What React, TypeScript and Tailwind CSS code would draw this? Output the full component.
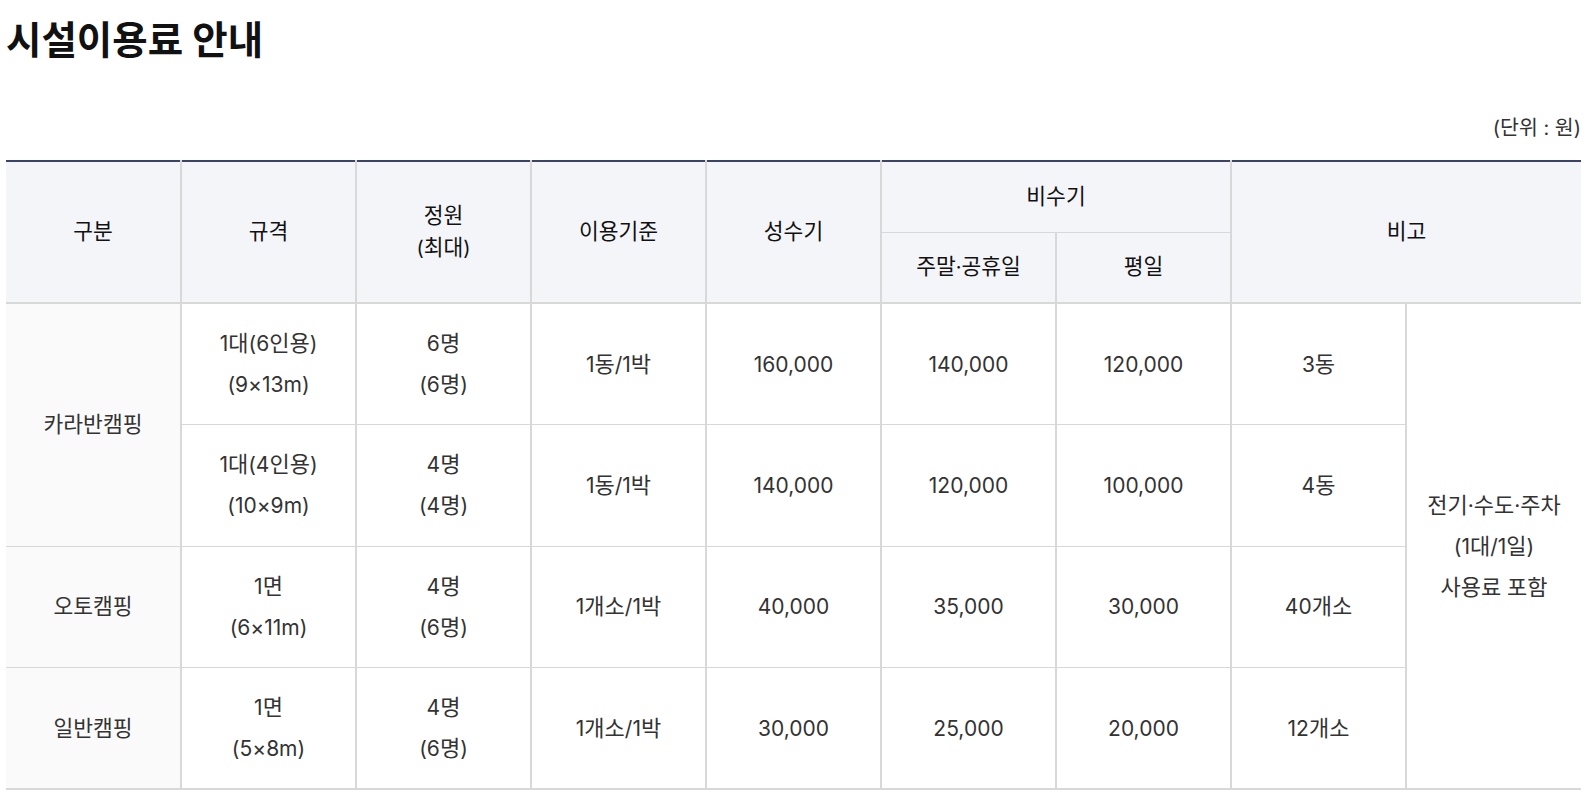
import React from "react";

const HANGUL = /([\uAC00-\uD7A3]+)/;

function T({ s, k = "text-[22px]" }: { s: string; k?: string }) {
  const parts = s.split(HANGUL);
  return (
    <>
      {parts.map((p, i) =>
        /[\uAC00-\uD7A3]/.test(p) ? (
          <span key={i} className={k}>
            {p}
          </span>
        ) : (
          <React.Fragment key={i}>{p}</React.Fragment>
        )
      )}
    </>
  );
}

function Lines({ lines, k }: { lines: string[]; k?: string }) {
  return (
    <>
      {lines.map((l, i) => (
        <React.Fragment key={i}>
          {i > 0 && <br />}
          <T s={l} k={k} />
        </React.Fragment>
      ))}
    </>
  );
}

const H = "text-[21.5px]";
const th = "bg-[#f4f5f9] text-[#111] font-normal text-[20px] leading-[31px] text-center align-middle border-[#d8d8d8]";
const td = "text-[#333] text-[21px] leading-[41px] text-center align-middle border-[#d8d8d8]";

function Cell({ children, className = "", rowSpan, colSpan }: { children?: React.ReactNode; className?: string; rowSpan?: number; colSpan?: number }) {
  return (
    <td rowSpan={rowSpan} colSpan={colSpan} className={`${td} ${className}`}>
      {children}
    </td>
  );
}

type Row = {
  first?: { text: string; rs: number };
  spec: string[];
  cap: string[];
  basis: string;
  peak: string;
  weekend: string;
  weekday: string;
  count: string;
  note?: boolean;
  last?: boolean;
};

const rows: Row[] = [
  { first: { text: "카라반캠핑", rs: 2 }, spec: ["1대(6인용)", "(9×13m)"], cap: ["6명", "(6명)"], basis: "1동/1박", peak: "160,000", weekend: "140,000", weekday: "120,000", count: "3동", note: true },
  { spec: ["1대(4인용)", "(10×9m)"], cap: ["4명", "(4명)"], basis: "1동/1박", peak: "140,000", weekend: "120,000", weekday: "100,000", count: "4동" },
  { first: { text: "오토캠핑", rs: 1 }, spec: ["1면", "(6×11m)"], cap: ["4명", "(6명)"], basis: "1개소/1박", peak: "40,000", weekend: "35,000", weekday: "30,000", count: "40개소" },
  { first: { text: "일반캠핑", rs: 1 }, spec: ["1면", "(5×8m)"], cap: ["4명", "(6명)"], basis: "1개소/1박", peak: "30,000", weekend: "25,000", weekday: "20,000", count: "12개소", last: true },
];

export default function App() {
  return (
    <div className="bg-white min-h-[796px] pl-[6px]" style={{ fontFamily: 'Inter, "Noto Sans CJK KR", "Noto Sans", sans-serif' }}>
      <div className="w-[1575px]">
        <h1 className="pt-[17px] text-[38.5px] leading-[46px] font-bold text-[#111]">시설이용료 안내</h1>
        <p className="mt-[53px] text-right text-[20px] leading-[24px] text-[#333]">
          <T s="(단위 : 원)" k="text-[20.5px]" />
        </p>
        <table className="mt-[20px] w-[1575px] table-fixed border-collapse border-t-2 border-t-[#3b4366] border-b-2 border-b-[#d8d8d8]">
          <colgroup>
            {Array.from({ length: 9 }).map((_, i) => (
              <col key={i} className="w-[175px]" />
            ))}
          </colgroup>
          <thead>
            <tr className="h-[71px]">
              <th rowSpan={2} className={`${th} border-r-2 border-b-2`}><T s="구분" k={H} /></th>
              <th rowSpan={2} className={`${th} border-x-2 border-b-2`}><T s="규격" k={H} /></th>
              <th rowSpan={2} className={`${th} border-x-2 border-b-2`}>
                <Lines lines={["정원", "(최대)"]} k={H} />
              </th>
              <th rowSpan={2} className={`${th} border-x-2 border-b-2`}><T s="이용기준" k={H} /></th>
              <th rowSpan={2} className={`${th} border-x-2 border-b-2`}><T s="성수기" k={H} /></th>
              <th colSpan={2} className={`${th} border-x-2 border-b`}><T s="비수기" k={H} /></th>
              <th rowSpan={2} colSpan={2} className={`${th} border-l-2 border-b-2`}><T s="비고" k={H} /></th>
            </tr>
            <tr className="h-[71px]">
              <th className={`${th} border-x-2 border-b-2`}><T s="주말·공휴일" k={H} /></th>
              <th className={`${th} border-x-2 border-b-2`}><T s="평일" k={H} /></th>
            </tr>
          </thead>
          <tbody>
            {rows.map((r, i) => (
              <tr key={i} className="h-[121.5px]">
                {r.first && (
                  <Cell rowSpan={r.first.rs} className={`bg-[#fafafa] text-[#111] border-r-2 ${r.last ? "" : "border-b"}`}>
                    <T s={r.first.text} k={H} />
                  </Cell>
                )}
                <Cell className={`border-x-2 ${r.last ? "" : "border-b"}`}>
                  <Lines lines={r.spec} />
                </Cell>
                <Cell className={`border-x-2 ${r.last ? "" : "border-b"}`}>
                  <Lines lines={r.cap} />
                </Cell>
                <Cell className={`border-x-2 ${r.last ? "" : "border-b"}`}><T s={r.basis} /></Cell>
                <Cell className={`border-x-2 ${r.last ? "" : "border-b"}`}>{r.peak}</Cell>
                <Cell className={`border-x-2 ${r.last ? "" : "border-b"}`}>{r.weekend}</Cell>
                <Cell className={`border-x-2 ${r.last ? "" : "border-b"}`}>{r.weekday}</Cell>
                <Cell className={`border-x-2 ${r.last ? "" : "border-b"}`}><T s={r.count} /></Cell>
                {r.note && (
                  <Cell rowSpan={4} className="border-l-2">
                    <Lines lines={["전기·수도·주차", "(1대/1일)", "사용료 포함"]} />
                  </Cell>
                )}
              </tr>
            ))}
          </tbody>
        </table>
      </div>
    </div>
  );
}
